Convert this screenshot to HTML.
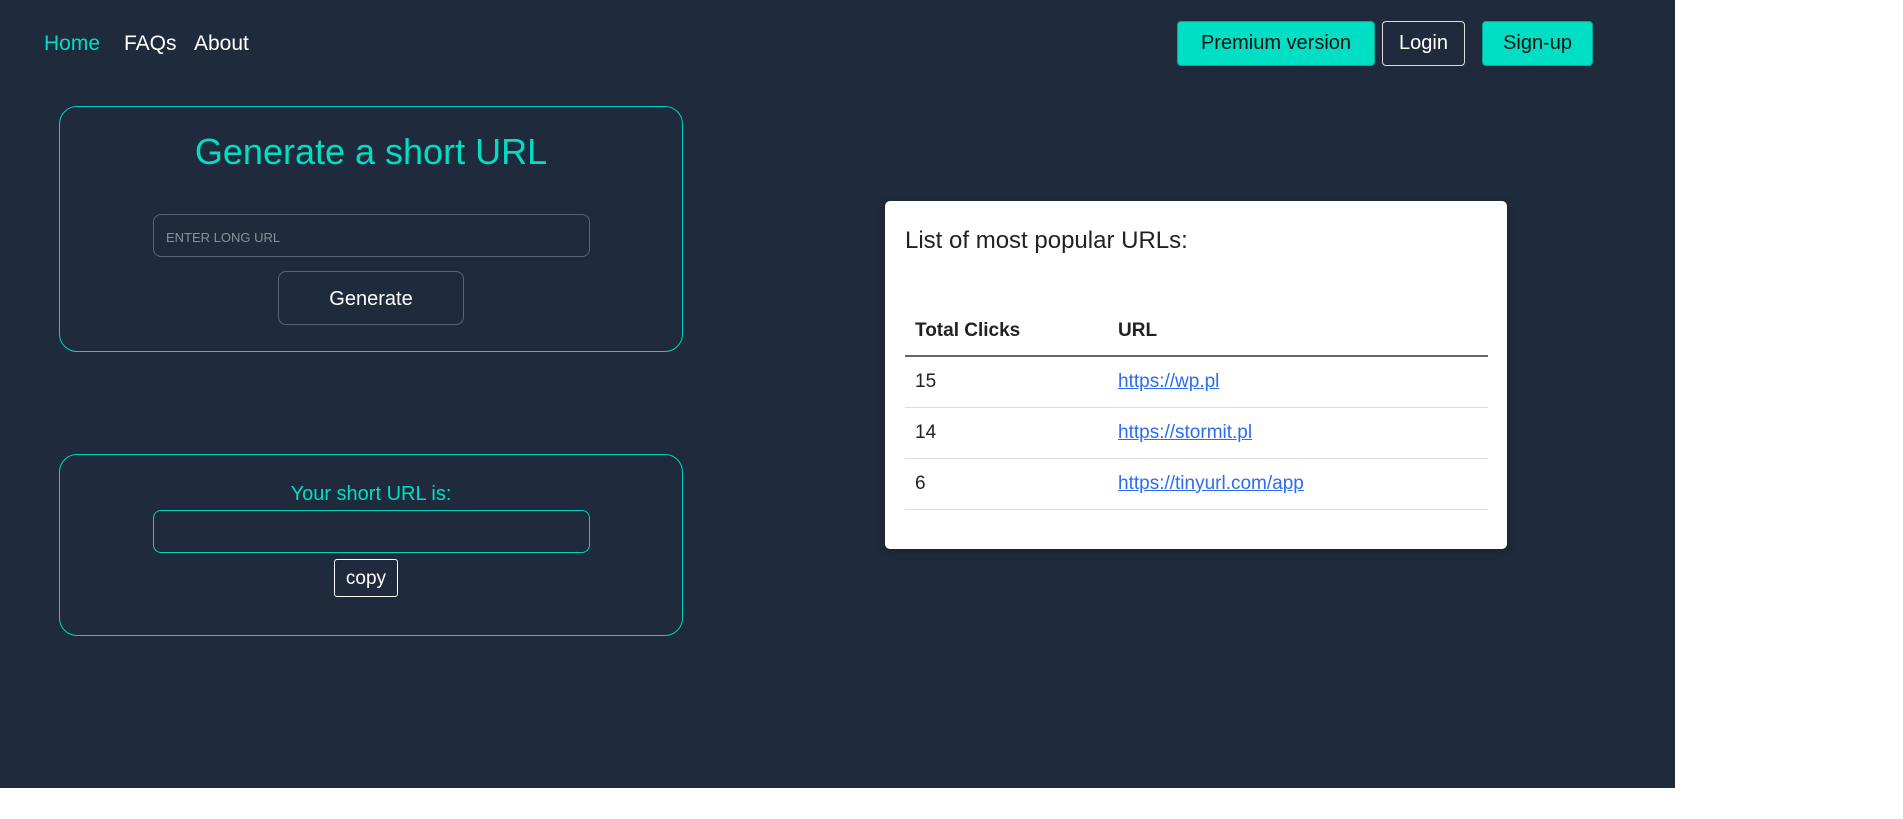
<!DOCTYPE html>
<html><head><style>
*{box-sizing:border-box;margin:0;padding:0}
body{width:1903px;height:819px;background:#fff;font-family:"Liberation Sans",sans-serif;position:relative;overflow:hidden}
#bg{position:absolute;left:0;top:0;width:1675px;height:788px;background:#1f2b3c}
.a{position:absolute}
.nav{top:32px;font-size:21px;color:#fff}
.btn{position:absolute;top:21px;height:45px;border-radius:4px;font-size:20px;display:flex;align-items:center;justify-content:center}
.teal{background:#00dfc4;color:#111;border:1px solid #0a9;}
.card{position:absolute;left:59px;width:624px;border:1px solid #00d5bb;border-radius:18px}
.inp{position:absolute;left:153px;width:437px;height:43px;border-radius:8px}
table{border-collapse:collapse;position:absolute;left:905px;top:307px;width:583px;font-size:19px;color:#222}
td,th{text-align:left;padding-left:10px}
th{height:49px;border-bottom:2px solid #666;font-weight:bold}
td{height:51px;border-bottom:1px solid #ddd}
a{color:#2a6df4;text-decoration:underline}
</style></head><body>
<div id="bg"></div>
<div class="a nav" style="left:44px;color:#00dfc4">Home</div>
<div class="a nav" style="left:124px">FAQs</div>
<div class="a nav" style="left:194px">About</div>
<div class="btn teal" style="left:1177px;width:198px">Premium version</div>
<div class="btn" style="left:1382px;width:83px;border:1px solid #ddd;color:#fff">Login</div>
<div class="btn teal" style="left:1482px;width:111px">Sign-up</div>

<div class="card" style="top:106px;height:246px"></div>
<div class="a" style="left:59px;width:624px;top:131px;text-align:center;color:#00dfc4;font-size:36px">Generate a short URL</div>
<div class="inp" style="top:214px;border:1px solid #5a6475;color:#8a909a;font-size:13px;padding:15px 0 0 12px">ENTER LONG URL</div>
<div class="a" style="left:278px;top:271px;width:186px;height:54px;border:1px solid #5a6475;border-radius:8px;color:#fff;font-size:20px;text-align:center;line-height:54px">Generate</div>

<div class="card" style="top:454px;height:182px"></div>
<div class="a" style="left:59px;width:624px;top:483px;text-align:center;color:#00dfc4;font-size:20px">Your short URL is:</div>
<div class="inp" style="top:510px;border:1px solid #00d5bb"></div>
<div class="a" style="left:334px;top:559px;width:64px;height:38px;border:1px solid #fff;border-radius:3px;color:#fff;font-size:19px;text-align:center;line-height:37px">copy</div>

<div class="a" style="left:885px;top:201px;width:622px;height:348px;background:#fff;border-radius:5px;box-shadow:0 2px 8px rgba(0,0,0,.3)"></div>
<div class="a" style="left:905px;top:227px;font-size:24px;color:#222">List of most popular URLs:</div>
<table>
<tr><th style="width:203px">Total Clicks</th><th>URL</th></tr>
<tr><td>15</td><td><a>https://wp.pl</a></td></tr>
<tr><td>14</td><td><a>https://stormit.pl</a></td></tr>
<tr><td>6</td><td><a>https://tinyurl.com/app</a></td></tr>
</table>
</body></html>
